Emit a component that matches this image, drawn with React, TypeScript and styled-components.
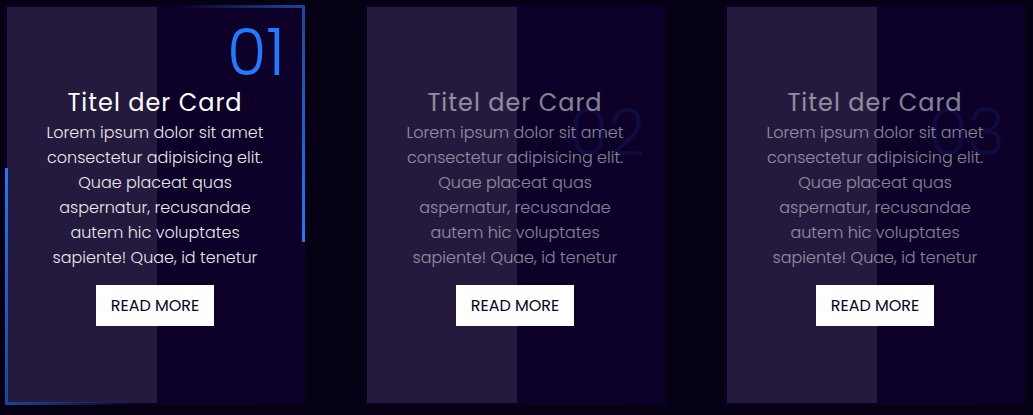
import React from "react";
import styled, { createGlobalStyle } from "styled-components";

const GlobalStyle = createGlobalStyle`
  *, *::before, *::after { box-sizing: border-box; }
  body {
    margin: 0;
    min-height: 100vh;
    background: #070016;
    font-family: Poppins, Inter, "Open Sans", sans-serif;
  }
`;

const CardGrid = styled.main`
  display: grid;
  grid-template-columns: repeat(3, 1fr);
  gap: 60px;
  padding: 5px 8px 10px 5px;
`;

const CardBox = styled.article`
  position: relative;
  display: flex;
  min-height: 400px;
  background: #0c0028;
  box-shadow: 0 5px 30px rgba(0, 0, 0, 0.3);

  &::before {
    content: "";
    position: absolute;
    inset: 2px 50% 2px 2px;
    margin-right: -2px;
    background: rgba(255, 255, 255, 0.1);
  }
`;

/* Lit stretches of the border, fading out behind the bright ends. */
const GlowFrame = styled.span`
  position: absolute;
  inset: 0;
  background:
    linear-gradient(90deg, transparent, #1b4795) top right / 125px 3px no-repeat,
    linear-gradient(180deg, #1b4795, #2079fa) top right / 3px 237px no-repeat,
    linear-gradient(0deg, #1b4795, #2079fa) bottom left / 3px 237px no-repeat,
    linear-gradient(270deg, transparent, #1b4795) bottom left / 125px 3px no-repeat;
`;

const CardNumber = styled.span<{ $active: boolean }>`
  position: absolute;
  top: ${(p) => (p.$active ? 16 : 96)}px;
  right: 20px;
  font-size: 64px;
  font-weight: 300;
  line-height: 64px;
  color: #1f7bff;
  opacity: ${(p) => (p.$active ? 1 : 0.1)};
`;

const Content = styled.div`
  position: relative;
  flex: 1;
  display: flex;
  flex-direction: column;
  align-items: center;
  padding: 80px 20px 70px;
  text-align: center;
  color: #fff;
`;

const Title = styled.h2<{ $active: boolean }>`
  margin: 0;
  font-size: 24px;
  font-weight: 400;
  line-height: 35px;
  letter-spacing: 1px;
  opacity: ${(p) => (p.$active ? 1 : 0.5)};
`;

const Description = styled.p<{ $active: boolean }>`
  margin: 0;
  font-size: 16px;
  font-weight: 300;
  line-height: 25px;
  opacity: ${(p) => (p.$active ? 0.9 : 0.5)};
`;

const ReadMore = styled.a`
  margin-top: 15px;
  padding: 8px 15px;
  background: #fff;
  color: #0c0028;
  font-size: 16px;
  font-weight: 400;
  line-height: 25px;
  text-decoration: none;
  text-transform: uppercase;
`;

const cards = [
  { number: "01", active: true },
  { number: "02", active: false },
  { number: "03", active: false },
];

export default function App() {
  return (
    <>
      <GlobalStyle />
      <CardGrid>
        {cards.map(({ number, active }) => (
          <CardBox key={number}>
            {active && <GlowFrame />}
            <CardNumber $active={active}>{number}</CardNumber>
            <Content>
              <Title $active={active}>Titel der Card</Title>
              <Description $active={active}>
                Lorem ipsum dolor sit amet
                <br />
                consectetur adipisicing elit.
                <br />
                Quae placeat quas
                <br />
                aspernatur, recusandae
                <br />
                autem hic voluptates
                <br />
                sapiente! Quae, id tenetur
              </Description>
              <ReadMore href="#">Read More</ReadMore>
            </Content>
          </CardBox>
        ))}
      </CardGrid>
    </>
  );
}
